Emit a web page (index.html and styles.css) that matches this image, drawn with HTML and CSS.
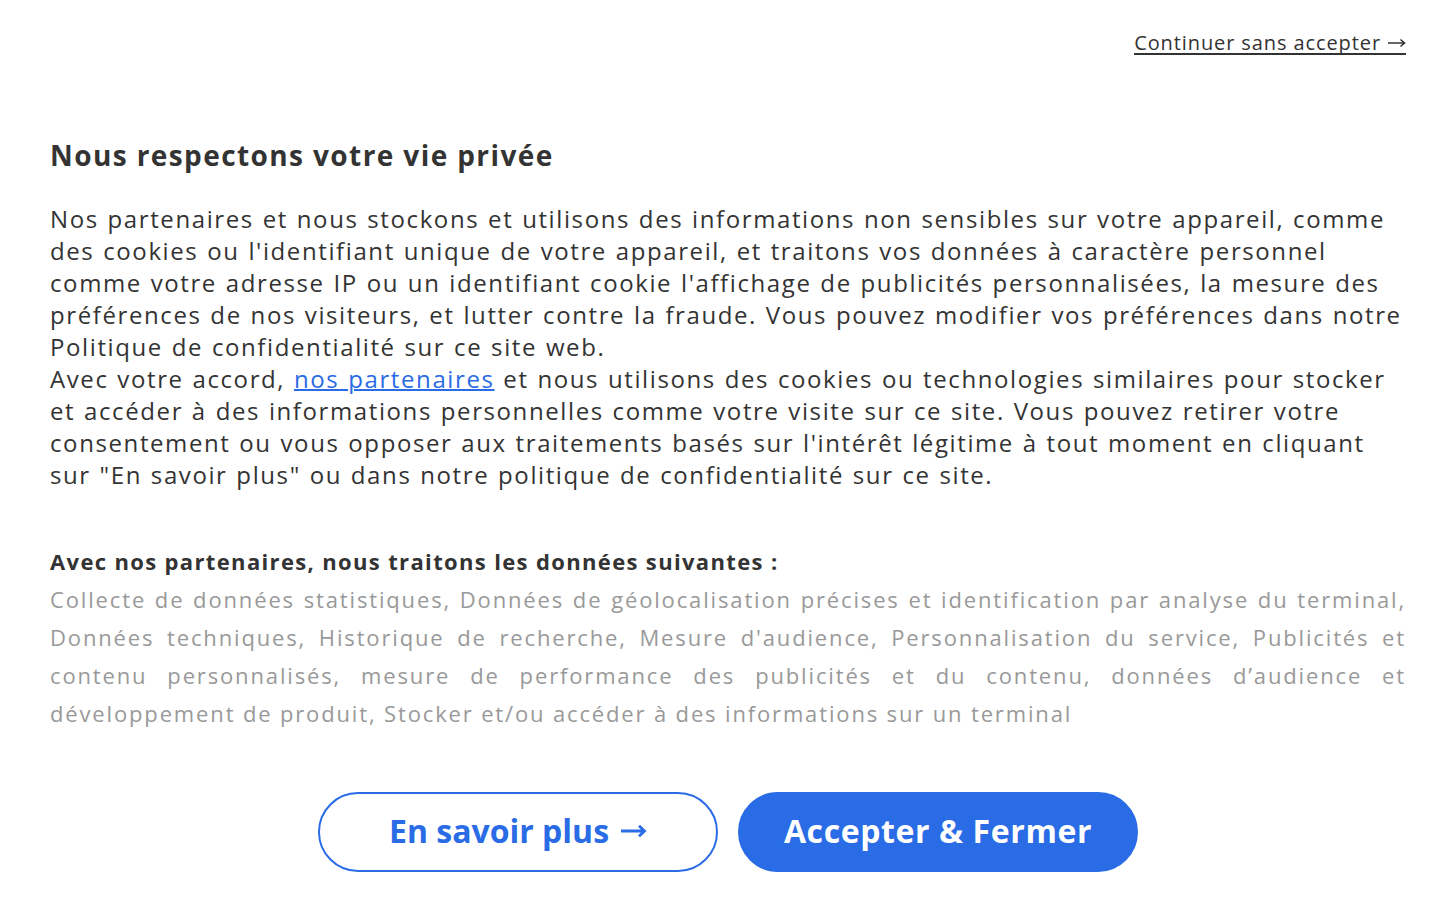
FILE: index.html
```html
<!DOCTYPE html>
<html lang="fr">
<head>
<meta charset="utf-8">
<title>Consentement</title>
<link rel="stylesheet" href="styles.css">
</head>
<body>
<div class="page">
  <div class="topbar">
    <a class="skip" href="#">Continuer sans accepter <svg class="arrow-sm" viewBox="0 0 18 10" width="18" height="10"><path d="M0 5H16.5M12.5 1.5L16.5 5L12.5 8.5" fill="none" stroke="currentColor" stroke-width="1.6"/></svg></a>
  </div>
  <h1 class="title">Nous respectons votre vie privée</h1>
  <p class="intro">
    <span class="line">Nos partenaires et nous stockons et utilisons des informations non sensibles sur votre appareil, comme</span>
    <span class="line">des cookies ou l'identifiant unique de votre appareil, et traitons vos données à caractère personnel</span>
    <span class="line">comme votre adresse IP ou un identifiant cookie l'affichage de publicités personnalisées, la mesure des</span>
    <span class="line">préférences de nos visiteurs, et lutter contre la fraude. Vous pouvez modifier vos préférences dans notre</span>
    <span class="line">Politique de confidentialité sur ce site web.</span>
    <span class="line">Avec votre accord, <a class="link" href="#">nos partenaires</a> et nous utilisons des cookies ou technologies similaires pour stocker</span>
    <span class="line">et accéder à des informations personnelles comme votre visite sur ce site. Vous pouvez retirer votre</span>
    <span class="line">consentement ou vous opposer aux traitements basés sur l'intérêt légitime à tout moment en cliquant</span>
    <span class="line">sur "En savoir plus" ou dans notre politique de confidentialité sur ce site.</span>
  </p>
  <h2 class="subtitle">Avec nos partenaires, nous traitons les données suivantes :</h2>
  <p class="purposes">
    <span class="line just">Collecte de données statistiques, Données de géolocalisation précises et identification par analyse du terminal,</span>
    <span class="line just">Données techniques, Historique de recherche, Mesure d'audience, Personnalisation du service, Publicités et</span>
    <span class="line just">contenu personnalisés, mesure de performance des publicités et du contenu, données d’audience et</span>
    <span class="line">développement de produit, Stocker et/ou accéder à des informations sur un terminal</span>
  </p>
  <div class="actions">
    <button class="btn btn-outline">En savoir plus <svg class="arrow-lg" viewBox="0 0 26 14" width="26" height="14"><path d="M0 7H23.5M18 1.8L23.5 7L18 12.2" fill="none" stroke="currentColor" stroke-width="2.8"/></svg></button>
    <button class="btn btn-primary">Accepter &amp; Fermer</button>
  </div>
</div>
</body>
</html>
```

FILE: styles.css
```css
* { box-sizing: border-box; }
html, body { margin: 0; padding: 0; background: #fff; }
body {
  font-family: "Open Sans", "Liberation Sans", sans-serif;
  color: #333;
}
.page {
  padding: 28px 48px 0 50px;
}
.topbar {
  display: flex;
  justify-content: flex-end;
  align-items: flex-start;
  height: 30px;
}
.skip {
  display: inline-flex;
  align-items: center;
  gap: 7px;
  margin-top: 5px;
  color: #333;
  font-size: 20px;
  letter-spacing: 0.9px;
  line-height: 20px;
  text-decoration: none;
  border-bottom: 2px solid #333;
}
.arrow-sm {
  display: block;
  margin-top: -1px;
}
.title {
  margin: 79px 0 0;
  font-size: 28px;
  line-height: 36px;
  font-weight: 700;
  letter-spacing: 1.4px;
  color: #333;
}
.intro {
  margin: 30px 0 0;
  font-size: 24px;
  line-height: 32px;
  letter-spacing: 1.6px;
  word-spacing: 1px;
  color: #333;
}
.line {
  display: block;
  white-space: nowrap;
}
.link {
  color: #2a6be6;
  text-decoration: underline;
  text-decoration-thickness: 1.5px;
}
.subtitle {
  margin: 54px 0 0;
  font-size: 22px;
  line-height: 32px;
  font-weight: 700;
  letter-spacing: 1.35px;
  color: #333;
}
.purposes {
  margin: 3px 0 0;
  font-size: 22px;
  line-height: 38px;
  letter-spacing: 1.85px;
  color: #999;
}
.purposes .just {
  text-align: justify;
  text-align-last: justify;
}
.actions {
  display: flex;
  justify-content: center;
  gap: 20px;
  margin-top: 60px;
}
.btn {
  display: flex;
  align-items: center;
  justify-content: center;
  gap: 12px;
  width: 400px;
  height: 80px;
  padding: 0 0 4px;
  border-radius: 40px;
  font-family: inherit;
  font-size: 32px;
  font-weight: 700;
  cursor: pointer;
}
.btn-outline {
  background: #fff;
  border: 2px solid #2a6be6;
  color: #2a6be6;
}
.btn-primary {
  background: #2a6be6;
  border: 2px solid #2a6be6;
  color: #fff;
  letter-spacing: 0.6px;
}
.arrow-lg {
  display: block;
  margin-top: 2px;
}
```
